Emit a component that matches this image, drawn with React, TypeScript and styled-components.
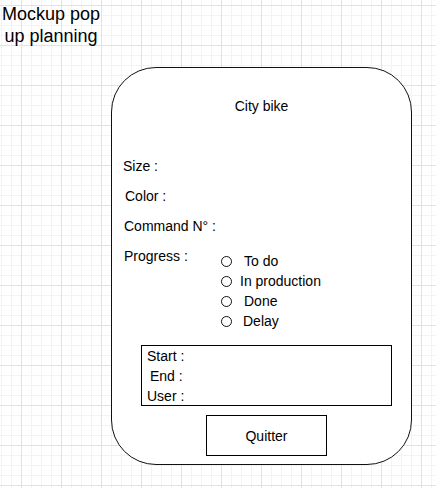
import styled, { createGlobalStyle } from "styled-components";

const GlobalStyle = createGlobalStyle`
  html, body {
    margin: 0;
    padding: 0;
    background: #fff;
  }
  * {
    box-sizing: border-box;
  }
`;

// draw.io style page grid: minor every 10px, major every 40px
const Canvas = styled.div`
  position: relative;
  width: 436px;
  height: 488px;
  overflow: hidden;
  font-family: "Liberation Sans", Arial, sans-serif;
  color: #000;
  background-color: #fff;
  background-image: linear-gradient(to right, #e2e2e2 1px, transparent 1px),
    linear-gradient(to bottom, #e2e2e2 1px, transparent 1px),
    linear-gradient(to right, #f3f3f3 1px, transparent 1px),
    linear-gradient(to bottom, #f3f3f3 1px, transparent 1px);
  background-size: 40px 40px, 40px 40px, 10px 10px, 10px 10px;
  background-position: 21px 5px, 21px 5px, 1px 5px, 1px 5px;
`;

const Note = styled.div`
  position: absolute;
  left: 0;
  top: 4px;
  width: 102px;
  font-size: 18px;
  line-height: 21.6px;
  text-align: center;
`;

const Popup = styled.div`
  position: absolute;
  left: 111px;
  top: 67px;
  width: 301px;
  height: 398px;
  background: #fff;
  border: 1px solid #111;
  border-radius: 45px;
  font-size: 14px;
  line-height: 20px;
`;

const Heading = styled.div`
  margin-top: 28px;
  text-align: center;
`;

const Field = styled.div<{ $indent: number; $gap?: number }>`
  margin-top: ${(p) => p.$gap ?? 10}px;
  padding-left: ${(p) => p.$indent}px;
  height: 20px;
  white-space: nowrap;
`;

const ProgressRow = styled.div`
  display: flex;
  margin-top: 10px;
`;

const ProgressLabel = styled.div`
  width: 109px;
  padding-left: 12px;
  flex: none;
`;

const RadioList = styled.div`
  margin-top: 5px;
  display: flex;
  flex-direction: column;
`;

const RadioItem = styled.label<{ $space: number }>`
  display: flex;
  align-items: center;
  height: 20px;
  white-space: nowrap;

  span:last-child {
    margin-left: ${(p) => p.$space}px;
  }
`;

const Circle = styled.span`
  width: 11px;
  height: 11px;
  border: 1.4px solid #111;
  border-radius: 50%;
  flex: none;
`;

const InfoBox = styled.div`
  margin: 14px 0 0 29px;
  width: 251px;
  height: 61px;
  border: 1px solid #000;
`;

const InfoLine = styled.div<{ $indent: number }>`
  height: 20px;
  padding-left: ${(p) => p.$indent}px;
`;

const QuitButton = styled.button`
  display: block;
  margin: 9px 0 0 94px;
  width: 121px;
  height: 41px;
  padding: 0;
  border: 1px solid #000;
  background: #fff;
  font: inherit;
  color: #000;
  cursor: pointer;
`;

const statuses = [
  { label: "To do", space: 12 },
  { label: "In production", space: 8 },
  { label: "Done", space: 12 },
  { label: "Delay", space: 11 },
];

export default function App() {
  return (
    <>
      <GlobalStyle />
      <Canvas>
        <Note>
          Mockup pop
          <br />
          up planning
        </Note>
        <Popup>
          <Heading>City bike</Heading>
          <Field $indent={11} $gap={40}>Size :</Field>
          <Field $indent={13}>Color :</Field>
          <Field $indent={12}>Command N° :</Field>
          <ProgressRow>
            <ProgressLabel>Progress :</ProgressLabel>
            <RadioList>
              {statuses.map((s) => (
                <RadioItem key={s.label} $space={s.space}>
                  <Circle />
                  <span>{s.label}</span>
                </RadioItem>
              ))}
            </RadioList>
          </ProgressRow>
          <InfoBox>
            <InfoLine $indent={5}>Start :</InfoLine>
            <InfoLine $indent={8}>End :</InfoLine>
            <InfoLine $indent={5}>User :</InfoLine>
          </InfoBox>
          <QuitButton>Quitter</QuitButton>
        </Popup>
      </Canvas>
    </>
  );
}
